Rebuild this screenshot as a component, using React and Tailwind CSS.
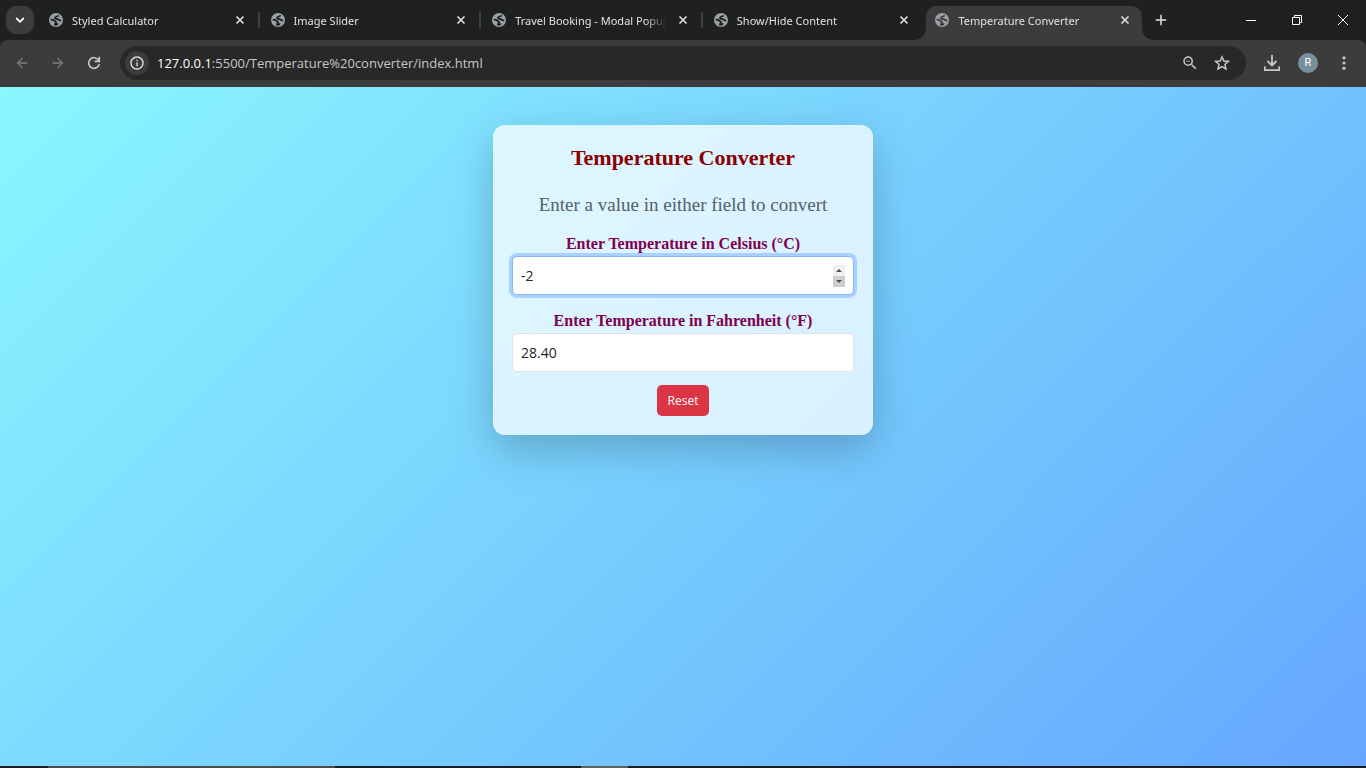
import { useState } from "react";
import { MdAdd, MdArrowBack, MdArrowForward, MdInfoOutline, MdZoomOut } from "react-icons/md";

const TABS = ["Styled Calculator", "Image Slider", "Travel Booking - Modal Popup", "Show/Hide Content", "Temperature Converter"];

function Globe({ active }) {
  return (
    <svg className="size-3.5 shrink-0" viewBox="0 0 14 14" fill="none" aria-hidden="true">
      <circle cx="7" cy="7" r="7" fill="#9aa0a6" />
      <path
        d="M9.400 2.300C9.300 3.800 6.400 3.200 6 4.800c-.3 1.300 2.300.9 3.300 1.600 1 .7 1.500 1.300 2.900.9M1.700 6.600c1.700-.2 2.700.2 3.500 1.100.7.8 2 .5 1.900 1.700-.1 1-1.300 1.100-1.200 2.200 1.400.5 2.500-.2 3-1.300"
        stroke={active ? "#3c3c3c" : "#1f2120"}
        strokeWidth="1.8"
        strokeLinejoin="round"
      />
    </svg>
  );
}

function Tab({ title, active, divider }) {
  return (
    <li className="relative flex h-full min-w-0 items-end">
      <div
        className={
          active
            ? "relative ml-0.5 mr-1 flex h-[34px] min-w-0 flex-1 items-center rounded-t-[10px] bg-[#3c3c3c] pb-[6px] pl-[9px] pr-3"
            : "flex h-[34px] min-w-0 flex-1 items-center pb-[6px] pl-[11px] pr-[15px]"
        }
      >
        {active && (
          <>
            <span className="absolute -left-2.5 bottom-0 size-2.5 bg-[radial-gradient(circle_at_0_0,transparent_9px,#3c3c3c_10px)]" />
            <span className="absolute -right-2.5 bottom-0 size-2.5 bg-[radial-gradient(circle_at_100%_0,transparent_9px,#3c3c3c_10px)]" />
          </>
        )}
        <Globe active={active} />
        <span className="ml-[9px] min-w-0 flex-1 overflow-hidden whitespace-nowrap pt-0.5 font-['Noto_Sans','Open_Sans',sans-serif] text-[11px] leading-4 text-[#dfe1e3] [mask-image:linear-gradient(to_right,black_calc(100%-20px),transparent)]">
          {title}
        </span>
        <button type="button" aria-label={"Close " + title} className="ml-3 shrink-0 text-[#dfe1e3]">
          <svg className="size-2.5" viewBox="0 0 10 10" fill="none" stroke="currentColor" strokeWidth="1.600"><path d="M1.500 1.500l7 7M8.500 1.500l-7 7" /></svg>
        </button>
      </div>
      {divider && <span className="absolute right-0 top-3 h-4 w-0.5 bg-[#3f4140]" />}
    </li>
  );
}

function Browser() {
  return (
    <header className="bg-[#1f2120] font-['Open_Sans','Noto_Sans',sans-serif]">
      <div className="flex h-10 items-center">
        <button type="button" aria-label="Search tabs" className="ml-1.5 flex size-7 shrink-0 items-center justify-center rounded-[10px] bg-[#3c3c3c] text-white">
          <svg className="size-2.5" viewBox="0 0 10 10" fill="none" stroke="currentColor" strokeWidth="1.800"><path d="M1.200 3L5 6.800 8.800 3" /></svg>
        </button>
        <ul className="ml-1 grid h-full max-w-[1108px] flex-1 grid-cols-5">
          {TABS.map((t, i) => (
            <Tab key={t} title={t} active={i === 4} divider={i < 3} />
          ))}
        </ul>
        <button type="button" aria-label="New tab" className="ml-1.5 text-[#dfe1e3]">
          <MdAdd className="size-[18px]" />
        </button>
        <div className="ml-auto flex h-full text-white">
          <button type="button" aria-label="Minimize" className="flex w-[46px] items-center justify-center">
            <svg className="size-2.5" viewBox="0 0 10 10" stroke="currentColor"><path d="M0 5.500h10" /></svg>
          </button>
          <button type="button" aria-label="Restore" className="flex w-[46px] items-center justify-center">
            <svg className="size-2.5" viewBox="0 0 10 10" fill="none" stroke="currentColor"><path d="M.5 2.500h7v7h-7zM2.500 2.500V.5h7v7H7.500" /></svg>
          </button>
          <button type="button" aria-label="Close window" className="flex w-[46px] items-center justify-center">
            <svg className="size-2.5" viewBox="0 0 10 10" stroke="currentColor"><path d="M0 0l10 10M10 0L0 10" /></svg>
          </button>
        </div>
      </div>
      <nav className="flex h-[47px] items-center rounded-t-lg bg-[#3c3c3c] pb-px pl-3.5 pr-3.5 text-[#c7c7c7]">
        <button type="button" aria-label="Back" className="text-[#7f7f7f]"><MdArrowBack className="size-4" /></button>
        <button type="button" aria-label="Forward" className="ml-5 text-[#7f7f7f]"><MdArrowForward className="size-4" /></button>
        <button type="button" aria-label="Reload" className="ml-5">
          <svg className="size-4" viewBox="0 0 16 16" fill="none" stroke="currentColor" strokeWidth="1.700"><path d="M13.200 9A5.300 5.300 0 1 1 12.600 5.400M13.300 1.800v4.600H8.700" /></svg>
        </button>
        <div className="ml-[18px] flex h-[34px] min-w-0 flex-1 items-center rounded-full bg-[#282828] pl-[5px] pr-[15px]">
          <button type="button" aria-label="Site information" className="flex size-6 shrink-0 items-center justify-center rounded-full bg-[#3c3c3c] text-[#dfe1e3]">
            <MdInfoOutline className="size-4" />
          </button>
          <a href="#app" className="ml-2 flex-1 truncate text-[13px] leading-5 text-[#c7c7c7]">
            <span className="text-white">127.0.0.1</span>:5500/Temperature%20converter/index.html
          </a>
          <button type="button" aria-label="Zoom"><MdZoomOut className="size-[18px]" /></button>
          <button type="button" aria-label="Bookmark this tab" className="ml-3.5">
            <svg className="size-[18px]" viewBox="0 0 18 18" fill="none" stroke="currentColor" strokeWidth="1.500"><path d="M9 2.800l1.800 4.200 4.600.4-3.500 3 1.100 4.500-4-2.400-4 2.400 1.100-4.500-3.500-3 4.600-.4z" /></svg>
          </button>
        </div>
        <button type="button" aria-label="Downloads" className="ml-[18px]">
          <svg className="size-4" viewBox="0 0 16 16" fill="none" stroke="currentColor" strokeWidth="1.800"><path d="M8 0v10M3.500 6L8 10.500 12.500 6M.9 11.500v3.600h14.200v-3.600" /></svg>
        </button>
        <button type="button" aria-label="Profile" className="ml-[18px] flex size-5 items-center justify-center rounded-full bg-[#78909c] font-['Roboto',sans-serif] text-[11px] text-white">R</button>
        <button type="button" aria-label="Menu" className="ml-[18px]">
          <svg className="size-4" viewBox="0 0 16 16" fill="currentColor"><circle cx="8" cy="2.800" r="1.600" /><circle cx="8" cy="8" r="1.600" /><circle cx="8" cy="13.200" r="1.600" /></svg>
        </button>
      </nav>
    </header>
  );
}

const FIELD = "h-[39px] w-full rounded-[5px] border bg-white px-2 text-sm text-[#212529] outline-none [appearance:textfield] [&::-webkit-inner-spin-button]:appearance-none";
const LABEL = "block text-base leading-6 font-bold text-[#800050]";

export default function App() {
  const [c, setC] = useState("-2");
  const [f, setF] = useState("28.40");
  const fromC = (v) => {
    setC(v);
    setF(v === "" ? "" : ((Number(v) * 9) / 5 + 32).toFixed(2));
  };
  const fromF = (v) => {
    setF(v);
    setC(v === "" ? "" : (((Number(v) - 32) * 5) / 9).toFixed(2));
  };
  return (
    <div id="app" className="flex min-h-screen flex-col">
      <Browser />
      <main className="flex-1 bg-linear-[135deg,#89f7fe,#66a6ff] px-4 pt-[38px] font-['Liberation_Serif',serif]">
        <section className="mx-auto max-w-[380px] rounded-xl bg-white/73 px-[19px] pb-[19px] pt-[19px] text-center shadow-[0_14px_42px_rgba(0,0,0,0.22)]">
          <h1 className="text-[22px] leading-7 font-bold text-[#8b0000]">Temperature Converter</h1>
          <p className="mt-[19px] text-[19px] leading-7 text-[#53616a]">Enter a value in either field to convert</p>
          <div className="mt-[13px]">
            <label htmlFor="celsius" className={LABEL}>Enter Temperature in Celsius (°C)</label>
            <div className="relative font-['Open_Sans','Noto_Sans',sans-serif]">
              <input id="celsius" type="number" value={c} onChange={(e) => fromC(e.target.value)} className={FIELD + " border-[#86b7fe] shadow-[0_0_0_3px_#a9d0ff]"} />
              <div className="absolute inset-y-0 right-[9px] flex flex-col justify-center text-[#505050]">
                <button type="button" aria-label="Increase" onClick={() => fromC(String(Number(c) + 1))} className="flex h-[11px] w-3 items-center justify-center bg-[#f0f0f0]">
                  <svg className="h-[3px] w-1.5" viewBox="0 0 6 3" fill="currentColor"><path d="M0 3l3-3 3 3z" /></svg>
                </button>
                <button type="button" aria-label="Decrease" onClick={() => fromC(String(Number(c) - 1))} className="flex h-[11px] w-3 items-center justify-center bg-[#cdcdcd]">
                  <svg className="h-[3px] w-1.5" viewBox="0 0 6 3" fill="currentColor"><path d="M0 0l3 3 3-3z" /></svg>
                </button>
              </div>
            </div>
          </div>
          <div className="mt-3.5">
            <label htmlFor="fahrenheit" className={LABEL}>Enter Temperature in Fahrenheit (°F)</label>
            <div className="font-['Open_Sans','Noto_Sans',sans-serif]">
              <input id="fahrenheit" type="number" value={f} onChange={(e) => fromF(e.target.value)} className={FIELD + " border-[#dee2e6]"} />
            </div>
          </div>
          <button type="button" onClick={() => { setC(""); setF(""); }} className="mt-[13px] h-[31px] rounded-[5px] bg-[#dc3545] px-[11px] font-['Open_Sans','Noto_Sans',sans-serif] text-xs text-white">Reset</button>
        </section>
      </main>
      <footer className="flex h-0.5 bg-[#1b1f24]">
        <span className="ml-[3.5%] w-[21%] bg-[#4d4a48]" />
        <span className="ml-[18%] w-[3.5%] bg-[#5f6062]" />
      </footer>
    </div>
  );
}
